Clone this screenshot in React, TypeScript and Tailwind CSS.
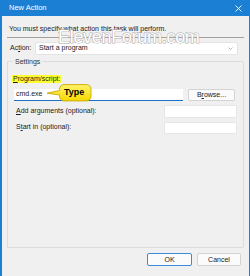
import React from "react";

const font = { fontFamily: '"Segoe UI", "Liberation Sans", Arial, sans-serif' };

export default function App() {
  return (
    <div
      className="relative w-[250px] h-[276px] overflow-hidden bg-[#1b7fd4] flex flex-col text-[7px] text-[#1a1a1a]"
      style={font}
    >
      {/* title bar */}
      <div className="h-[16px] flex items-center justify-between pl-[9px] pr-[8px] text-white text-[7.5px]">
        <span>New Action</span>
        <svg width="7" height="7" viewBox="0 0 7 7">
          <path d="M0.5 0.5 L6.5 6.5 M6.5 0.5 L0.5 6.5" stroke="white" strokeWidth="0.9" />
        </svg>
      </div>
      {/* body */}
      <div className="flex-1 ml-[2px] mr-[1px] bg-[#f0f0f0] flex flex-col px-[5px]">
        <div className="pl-[2px] pt-[8px] h-[21px] leading-[9px]">You must specify what action this task will perform.</div>
        <div className="h-px bg-[#a0a0a0]" />
        <div className="flex items-center mt-[4px] h-[13px]">
          <span className="w-[28px] pl-[3px]">
            Ac<span className="underline">t</span>ion:
          </span>
          <div className="w-[203px] h-[13px] bg-white border border-[#e4e4e4] rounded-[2px] flex items-center justify-between pl-[3px] pr-[4px]">
            <span>Start a program</span>
            <svg width="5" height="3" viewBox="0 0 5 3">
              <path d="M0.5 0.5 L2.5 2.5 L4.5 0.5" stroke="#9a9a9a" strokeWidth="0.7" fill="none" />
            </svg>
          </div>
        </div>
        <fieldset className="mt-[2px] border border-[#dcdcdc] rounded-[1px] h-[191px] px-[6px] pb-0 m-0 min-w-0">
          <legend className="ml-[-1px] px-[2px] leading-[9px] text-[#333]">Settings</legend>
          <div className="mt-[8px] -ml-[2px]">
            <span className="inline-block bg-[#ffff30] px-[1px] leading-[8px] h-[8px]">
              <span className="underline">P</span>rogram/script:
            </span>
          </div>
          <div className="flex mt-[4px] h-[12px]">
            <div className="w-[169px] h-[12px] bg-white border-b border-[#1f6fc5] flex items-center pl-[2px]">cmd.exe</div>
            <button className="ml-[5px] w-[47px] h-[12px] bg-[#fbfbfb] border border-[#d3d3d3] rounded-[2px] flex items-center justify-center text-[#1a1a1a] text-[7px] leading-none">
              B<span className="underline">r</span>owse...
            </button>
          </div>
          <div className="flex items-center justify-between mt-[4px] h-[13px]">
            <span className="pl-[2px]">
              <span className="underline">A</span>dd arguments (optional):
            </span>
            <div className="w-[73px] h-[13px] bg-white border border-[#e6e6e6] rounded-[1px]" />
          </div>
          <div className="flex items-center justify-between mt-[4px] h-[12px]">
            <span className="pl-[2px]">
              S<span className="underline">t</span>art in (optional):
            </span>
            <div className="w-[73px] h-[12px] bg-white border border-[#e6e6e6] rounded-[1px]" />
          </div>
        </fieldset>
        <div className="flex justify-end gap-[5px] mt-[5px] pr-[3px]">
          <button className="w-[45px] h-[13px] bg-[#fbfbfb] border border-[#3c8ad8] rounded-[2px] text-[7px] leading-none">OK</button>
          <button className="w-[44px] h-[13px] bg-[#fbfbfb] border border-[#d3d3d3] rounded-[2px] text-[7px] leading-none">Cancel</button>
        </div>
      </div>

      {/* watermark */}
      <div
        className="absolute left-[58px] top-[27px] text-[18px] leading-[20px] text-white tracking-[-0.3px] [-webkit-text-stroke:1px_#a8a8a8] [paint-order:stroke_fill] select-none"
        style={{ fontFamily: '"Liberation Sans", Arial, sans-serif' }}
      >
        ElevenForum.com
      </div>

      {/* Type callout */}
      <div className="absolute left-[46px] top-[84px] w-[46px] h-[18px]">
        <svg width="46" height="18" viewBox="0 0 46 18" className="absolute inset-0">
          <defs>
            <linearGradient id="yg" x1="0" y1="0" x2="0" y2="1">
              <stop offset="0" stopColor="#fff36a" />
              <stop offset="1" stopColor="#f5d800" />
            </linearGradient>
          </defs>
          <path
            d="M18 0.6 H40.5 A4.5 4.5 0 0 1 45 5.1 V12.4 A4.5 4.5 0 0 1 40.5 16.9 H18 A4.5 4.5 0 0 1 13.5 12.4 V11 L1 9.2 L13.5 6.5 V5.1 A4.5 4.5 0 0 1 18 0.6 Z"
            fill="url(#yg)"
            stroke="#c9a800"
            strokeWidth="0.9"
          />
        </svg>
        <span className="absolute left-[18px] top-[3px] text-[9px] font-bold leading-[11px] text-black" style={{ fontFamily: '"Liberation Sans", Arial, sans-serif' }}>
          Type
        </span>
      </div>
    </div>
  );
}
